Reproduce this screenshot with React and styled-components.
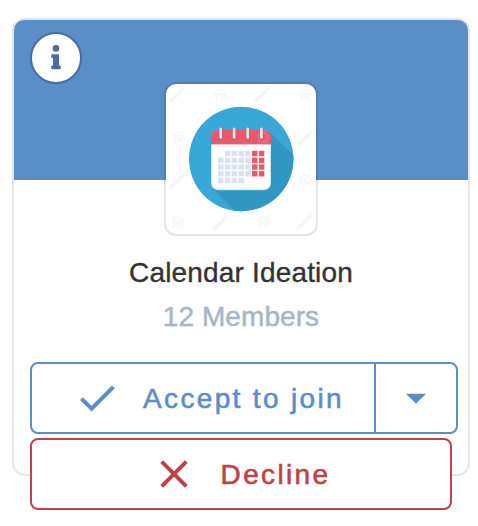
import React from "react";
import styled, { createGlobalStyle } from "styled-components";

const GlobalStyle = createGlobalStyle`
  * { box-sizing: border-box; }
  body {
    margin: 0;
    background: #fff;
    font-family: "Liberation Sans", Arial, sans-serif;
  }
`;

const Page = styled.main`
  padding: 18px 8px 0 12px;
  height: 526px;
  overflow: hidden;
`;

const Card = styled.article`
  display: flex;
  flex-direction: column;
  height: 458px;
  border: 2px solid #e4e4e4;
  border-radius: 13px;
`;

const Banner = styled.header`
  flex: none;
  height: 160px;
  padding: 12px 16px;
  background: #5a8ec7;
  border-radius: 10px 10px 0 0;
`;

const InfoButton = styled.button`
  display: flex;
  align-items: center;
  justify-content: center;
  width: 52px;
  height: 52px;
  padding: 0;
  border: 2px solid #4a6c9f;
  border-radius: 50%;
  background: #fff;
`;

const Avatar = styled.figure`
  flex: none;
  align-self: center;
  width: 154px;
  height: 154px;
  margin: -98px 0 0;
  border: 2px solid rgba(0, 0, 0, 0.11);
  border-radius: 12px;
  background: #fff;
  background-clip: padding-box;
  overflow: hidden;

  svg { display: block; }
`;

const Title = styled.h2`
  margin: 21px 0 0;
  color: #333;
  font-size: 28px;
  font-weight: 400;
  line-height: 32px;
  letter-spacing: 0.17px;
  text-align: center;
  -webkit-text-stroke: 0.35px currentColor;
`;

const Members = styled.p`
  margin: 12px 0 0;
  color: #a9b5c6;
  font-size: 28px;
  line-height: 32px;
  letter-spacing: 0.08px;
  text-align: center;
  -webkit-text-stroke: 0.5px currentColor;
`;

const Actions = styled.div`
  display: flex;
  flex-direction: column;
  flex: none;
  gap: 4px;
  width: 428px;
  margin: 29px 0 0 16px;
`;

const SplitButton = styled.div`
  display: flex;
`;

const Button = styled.button`
  display: flex;
  align-items: center;
  justify-content: center;
  width: ${(p) => p.$width}px;
  height: 72px;
  padding: 0 0 0 ${(p) => p.$inset || 0}px;
  border: 2px solid currentColor;
  border-radius: ${(p) => p.$radius || "8px"};
  margin-left: ${(p) => (p.$joined ? "-2px" : "0")};
  background: #fff;
  color: ${(p) => (p.$danger ? "#bd4347" : "#5a8ec7")};
  font: 400 28px/32px "Liberation Sans", Arial, sans-serif;
  letter-spacing: 2.35px;
  -webkit-text-stroke: 0.6px currentColor;

  svg { flex: none; }
`;

const Label = styled.span`
  margin-left: ${(p) => p.$gap}px;
  padding-top: 2px;
  white-space: nowrap;
`;

const InfoIcon = () => (
  <svg width="10" height="26" viewBox="0 0 10 26" fill="#4a6c9f">
    <circle cx="5" cy="3.4" r="3.3" />
    <path d="M1 9.2H7.3Q8 9.2 8 9.9V20.6H9Q9.7 20.6 9.7 21.3V23.6Q9.7 24.3 9 24.3H1Q.3 24.3 .3 23.6V21.3Q.3 20.6 1 20.6H2V12.9H1Q.3 12.9 .3 12.2V9.9Q.3 9.2 1 9.2Z" />
  </svg>
);

const CELLS = [
  [1, 6],
  [0, 6],
  [0, 6],
  [0, 6],
  [0, 3],
];

const MARKS = [
  [11, 11, 0], [55, 12, 1], [96, 11, 0], [140, 12, 1],
  [13, 54, 1], [139, 54, 0],
  [11, 97, 0], [140, 97, 1],
  [12, 139, 1], [54, 139, 0], [98, 139, 1], [138, 138, 0],
];

const CalendarPicture = () => (
  <svg width="150" height="150" viewBox="0 0 150 150">
    <g fill="none" stroke="#f5f5f5">
      {MARKS.map(([x, y, round]) =>
        round ? (
          <g key={`${x}-${y}`} strokeWidth="1.5">
            <path d={`M${x - 4} ${y + 5}V${y + 1}C${x - 9} ${y - 5} ${x + 1} ${y - 9} ${x + 4} ${y - 4}C${x + 7} ${y + 1} ${x + 2} ${y + 4} ${x - 1} ${y + 3}`} />
            <circle cx={x} cy={y - 1} r="2" />
          </g>
        ) : (
          <path key={`${x}-${y}`} d={`M${x - 7} ${y + 7}L${x + 7} ${y - 7}`} strokeWidth="3.2" />
        )
      )}
    </g>
    <clipPath id="disc"><circle cx="75.2" cy="75" r="52.2" /></clipPath>
    <g clipPath="url(#disc)">
      <rect x="22" y="22" width="107" height="107" fill="#37a7d8" />
      <path d="M103.5 47.5L135 79V135H77L46.5 104.5Z" fill="#3296c4" />
      <path d="M32 32L118 118M118 32L32 118" stroke="#fff" strokeOpacity=".06" />
    </g>
    <rect x="45" y="46.3" width="60" height="60" rx="7" fill="#b9d5e5" />
    <rect x="45.6" y="46" width="58.8" height="59.4" rx="6.5" fill="#fff" />
    <path d="M45 60V53Q45 46 52 46H98Q105 46 105 53V60Z" fill="#e65a6c" />
    <path d="M45 60H105" stroke="#d4657a" strokeWidth=".8" />
    <path d="M54.7 45.5V53.6M68.1 45.5V53.6M81.7 45.5V53.6M95.4 45.5V53.6" stroke="#c64e62" strokeWidth="3.8" strokeLinecap="round" />
    <path d="M54.7 45V53.4M68.1 45V53.4M81.7 45V53.4M95.4 45V53.4" stroke="#dce6f1" strokeWidth="2.8" strokeLinecap="round" />
    {CELLS.flatMap(([from, to], row) =>
      Array.from({ length: to - from + 1 }, (_, i) => {
        const col = from + i;
        return (
          <rect
            key={`${row}-${col}`}
            x={52 + col * 6.8}
            y={66.8 + row * 6.75}
            width="5.5"
            height="5.4"
            fill={col > 4 ? "#e65a6c" : "#dae2ee"}
          />
        );
      })
    )}
    <g fill="none" stroke="#fff" strokeOpacity=".18" strokeWidth="1.2">
      <path d="M93 59V55C89 50 97 45 101 51C104 56 99 59 96 57" />
    </g>
  </svg>
);

const CheckIcon = () => (
  <svg width="36" height="28" viewBox="0 0 36 28" fill="none" stroke="currentColor" strokeWidth="4">
    <path d="M1.4 14.6L11.6 24.6L33.4 2.8" />
  </svg>
);

const CrossIcon = () => (
  <svg width="28" height="28" viewBox="0 0 28 28" fill="none" stroke="currentColor" strokeWidth="4">
    <path d="M1.7 1.7L26.3 26.3M26.3 1.7L1.7 26.3" />
  </svg>
);

const CaretIcon = () => (
  <svg width="20" height="12" viewBox="0 0 20 12" fill="currentColor">
    <path d="M0 1.8H20L10 11.8Z" />
  </svg>
);

export default function App() {
  return (
    <>
      <GlobalStyle />
      <Page>
        <Card>
          <Banner>
            <InfoButton aria-label="Information"><InfoIcon /></InfoButton>
          </Banner>
          <Avatar><CalendarPicture /></Avatar>
          <Title>Calendar Ideation</Title>
          <Members>12 Members</Members>
          <Actions>
            <SplitButton>
              <Button $width={346} $radius="8px 0 0 8px" $inset={18}>
                <CheckIcon />
                <Label $gap={27}>Accept to join</Label>
              </Button>
              <Button $width={84} $radius="0 8px 8px 0" $joined aria-label="More options">
                <CaretIcon />
              </Button>
            </SplitButton>
            <Button $width={422} $danger $inset={8}>
              <CrossIcon />
              <Label $gap={33}>Decline</Label>
            </Button>
          </Actions>
        </Card>
      </Page>
    </>
  );
}
